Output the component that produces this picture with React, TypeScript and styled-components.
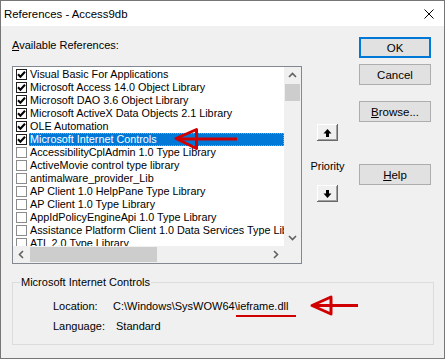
import React from 'react';
import styled, { createGlobalStyle } from 'styled-components';

type Ref = { name: string; checked: boolean; selected?: boolean };

const refs: Ref[] = [
    { name: 'Visual Basic For Applications', checked: true },
    { name: 'Microsoft Access 14.0 Object Library', checked: true },
    { name: 'Microsoft DAO 3.6 Object Library', checked: true },
    { name: 'Microsoft ActiveX Data Objects 2.1 Library', checked: true },
    { name: 'OLE Automation', checked: true },
    { name: 'Microsoft Internet Controls', checked: true, selected: true },
    { name: 'AccessibilityCplAdmin 1.0 Type Library', checked: false },
    { name: 'ActiveMovie control type library', checked: false },
    { name: 'antimalware_provider_Lib', checked: false },
    { name: 'AP Client 1.0 HelpPane Type Library', checked: false },
    { name: 'AP Client 1.0 Type Library', checked: false },
    { name: 'AppIdPolicyEngineApi 1.0 Type Library', checked: false },
    { name: 'Assistance Platform Client 1.0 Data Services Type Library', checked: false },
    { name: 'ATL 2.0 Type Library', checked: false },
];

const GlobalStyle = createGlobalStyle`
    html, body {
        margin: 0;
        padding: 0;
        background: #f0f0f0;
    }
    body {
        font-family: "Liberation Sans", Arial, sans-serif;
        color: #000;
    }
`;

const Dialog = styled.div`
    position: relative;
    box-sizing: border-box;
    width: 445px;
    height: 359px;
    border: 1px solid #767676;
    background: #f0f0f0;
    display: flex;
    flex-direction: column;
    overflow: hidden;
`;

const TitleBar = styled.div`
    height: 25px;
    flex-shrink: 0;
    background: #fff;
    display: flex;
    align-items: center;
    justify-content: space-between;
    padding: 0 10px 0 3px;
    font-size: 11.4px;
`;

const CloseIcon = styled.svg`
    width: 10px;
    height: 10px;
    display: block;
`;

const Body = styled.div`
    padding: 0 0 0 11px;
    display: flex;
    flex-direction: column;
`;

const TopRow = styled.div`
    display: grid;
    grid-template-columns: 290px 57px 72px;
`;

const LeftCol = styled.div`
    display: flex;
    flex-direction: column;
`;

const Caption = styled.div`
    margin-top: 12px;
    height: 14px;
    line-height: 14px;
    font-size: 11px;
`;

const Key = styled.span`
    text-decoration: underline;
    text-underline-offset: 1px;
`;

const ListBox = styled.div`
    margin-top: 14px;
    box-sizing: border-box;
    width: 290px;
    height: 198px;
    border: 1px solid #828790;
    background: #fff;
    display: grid;
    grid-template-columns: 1fr 17px;
    grid-template-rows: 1fr 17px;
`;

const Items = styled.div`
    overflow: hidden;
    padding-top: 1px;
    display: flex;
    flex-direction: column;
`;

const Row = styled.div`
    height: 13px;
    flex-shrink: 0;
    display: flex;
    align-items: center;
    font-size: 10.8px;
    white-space: nowrap;
`;

const Box = styled.span<{ $checked: boolean }>`
    box-sizing: border-box;
    width: 11px;
    height: 11px;
    margin: 0 2px 0 3px;
    flex-shrink: 0;
    border: 1px solid ${ p => p.$checked ? '#1e1e1e' : '#8c8c8c' };
    background: #fff;
    display: flex;
    align-items: center;
    justify-content: center;
`;

const Label = styled.span<{ $selected?: boolean }>`
    box-sizing: border-box;
    flex: 1 0 auto;
    height: 13px;
    line-height: 11px;
    padding: 0 1px;
    color: ${ p => p.$selected ? '#fff' : '#000' };
    background: ${ p => p.$selected ? '#0078d7' : 'transparent' };
    border: 1px dotted ${ p => p.$selected ? '#ff8a2a' : 'transparent' };
    border-left-width: 0;
`;

const VScroll = styled.div`
    background: #f0f0f0;
    display: flex;
    flex-direction: column;
`;

const HScroll = styled.div`
    background: #f0f0f0;
    display: flex;
    align-items: stretch;
`;

const Corner = styled.div`
    background: #f0f0f0;
`;

const ArrowCell = styled.div`
    flex: 0 0 17px;
    display: flex;
    align-items: center;
    justify-content: center;
`;

const Track = styled.div`
    flex: 1;
    display: flex;
`;

const VTrack = styled(Track)`
    flex-direction: column;
    padding: 0 1px;
`;

const Thumb = styled.div<{ $size: number }>`
    background: #cdcdcd;
    flex: 0 0 ${ p => p.$size }px;
`;

const HThumb = styled(Thumb)`
    margin: 1px 0;
`;

const Chevron = styled.svg`
    width: 9px;
    height: 9px;
    display: block;
`;

const PriorityCol = styled.div`
    padding-right: 6px;
    display: flex;
    flex-direction: column;
    align-items: center;
`;

const MoveButton = styled.div<{ $first?: boolean }>`
    margin-top: ${ p => p.$first ? '98px' : '12px' };
    width: 21px;
    height: 17px;
    background: #f0f0f0;
    box-shadow: inset -1px -1px #696969, inset 1px 1px #fff, inset -2px -2px #a0a0a0;
    display: flex;
    align-items: center;
    justify-content: center;
`;

const PriorityText = styled.div`
    margin-top: 18px;
    height: 14px;
    line-height: 14px;
    font-size: 11px;
`;

const ButtonCol = styled.div`
    display: flex;
    flex-direction: column;
`;

const Button = styled.div<{ $gap: number; $default?: boolean }>`
    box-sizing: border-box;
    margin-top: ${ p => p.$gap }px;
    width: 72px;
    height: 21px;
    background: #e1e1e1;
    border: ${ p => p.$default ? '2px solid #0078d7' : '1px solid #adadad' };
    display: flex;
    align-items: center;
    justify-content: center;
    font-size: 11.5px;
`;

const Group = styled.fieldset`
    margin: 12px 0 0 0;
    padding: 0;
    width: 422px;
    height: 69px;
    box-sizing: border-box;
    border: 1px solid #dcdcdc;
    min-inline-size: 0;
`;

const Legend = styled.legend`
    margin-left: 7px;
    padding: 0 1px;
    font-size: 11px;
    line-height: 13px;
`;

const InfoGrid = styled.div`
    margin: 7px 0 0 40px;
    display: grid;
    grid-template-columns: 60px auto;
    grid-auto-rows: 20px;
    align-items: center;
    font-size: 11px;
`;

const Value = styled.span<{ $shift?: number }>`
    padding-left: ${ p => p.$shift ?? 0 }px;
`;

const Annotations = styled.svg`
    position: absolute;
    top: -1px;
    left: -1px;
    width: 445px;
    height: 359px;
    pointer-events: none;
`;

const red = '#d10000';

function Check() {
    return (
        <svg width="9" height="9" viewBox="0 0 9 9">
            <polyline points="1,4.3 3.4,6.8 8,1.8" fill="none" stroke="#000" strokeWidth="2" />
        </svg>
    );
}

function Arrow({ dir }: { dir: 'up' | 'down' }) {
    return (
        <svg width="9" height="10" viewBox="0 0 9 10" style={ { transform: dir === 'down' ? 'rotate(180deg)' : undefined } }>
            <path d="M4.5 1 L8.5 5.5 H6 V9 H3 V5.5 H0.5 Z" fill="#000" />
        </svg>
    );
}

function Chev({ dir }: { dir: 'up' | 'down' | 'left' | 'right' }) {
    const rot = { up: 0, right: 90, down: 180, left: 270 }[dir];
    return (
        <Chevron viewBox="0 0 9 9">
            <polyline points="1,6 4.5,2.5 8,6" fill="none" stroke="#606060" strokeWidth="1.6" transform={ `rotate(${ rot } 4.5 4.5)` } />
        </Chevron>
    );
}

export default function App() {
    return (
        <>
            <GlobalStyle />
            <Dialog>
                <TitleBar>
                    <span>References - Access9db</span>
                    <CloseIcon viewBox="0 0 10 10">
                        <path d="M0.5 0.5 L9.5 9.5 M9.5 0.5 L0.5 9.5" stroke="#000" strokeWidth="1" />
                    </CloseIcon>
                </TitleBar>
                <Body>
                    <TopRow>
                        <LeftCol>
                            <Caption><Key>A</Key>vailable References:</Caption>
                            <ListBox>
                                <Items>
                                    {
                                        refs.map(({ name, checked, selected }) => (
                                            <Row key={ name }>
                                                <Box $checked={ checked }>{ checked && <Check /> }</Box>
                                                <Label $selected={ selected }>{ name }</Label>
                                            </Row>
                                        ))
                                    }
                                </Items>
                                <VScroll>
                                    <ArrowCell><Chev dir="up" /></ArrowCell>
                                    <VTrack>
                                        <Thumb $size={ 17 } />
                                    </VTrack>
                                    <ArrowCell><Chev dir="down" /></ArrowCell>
                                </VScroll>
                                <HScroll>
                                    <ArrowCell><Chev dir="left" /></ArrowCell>
                                    <Track>
                                        <HThumb $size={ 127 } />
                                    </Track>
                                    <ArrowCell><Chev dir="right" /></ArrowCell>
                                </HScroll>
                                <Corner />
                            </ListBox>
                        </LeftCol>
                        <PriorityCol>
                            <MoveButton $first><Arrow dir="up" /></MoveButton>
                            <PriorityText>Priority</PriorityText>
                            <MoveButton><Arrow dir="down" /></MoveButton>
                        </PriorityCol>
                        <ButtonCol>
                            <Button $gap={ 11 } $default>OK</Button>
                            <Button $gap={ 6 }>Cancel</Button>
                            <Button $gap={ 16 }><span><Key>B</Key>rowse...</span></Button>
                            <Button $gap={ 42 }><span><Key>H</Key>elp</span></Button>
                        </ButtonCol>
                    </TopRow>
                    <Group>
                        <Legend>Microsoft Internet Controls</Legend>
                        <InfoGrid>
                            <span>Location:</span>
                            <Value>C:\Windows\SysWOW64\ieframe.dll</Value>
                            <span>Language:</span>
                            <Value $shift={ 3 }>Standard</Value>
                        </InfoGrid>
                    </Group>
                </Body>
                <Annotations viewBox="0 0 445 359">
                    <g fill="none" stroke={ red } strokeWidth="3" strokeLinejoin="round">
                        <polygon points="176,138.5 196.5,129.5 196.5,148.5" />
                        <line x1="178" y1="139" x2="237" y2="139" />
                        <polygon points="312,305.5 331,297 331,314" />
                        <line x1="314" y1="305.5" x2="358" y2="305.5" />
                    </g>
                    <line x1="236" y1="316" x2="296" y2="316" stroke={ red } strokeWidth="2" />
                </Annotations>
            </Dialog>
        </>
    );
}
